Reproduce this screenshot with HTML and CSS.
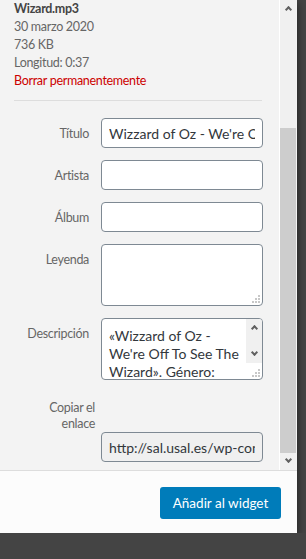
FILE: index.html
```html
<!DOCTYPE html>
<html lang="es">
<head>
  <meta charset="UTF-8" />
  <title>Detalles del adjunto</title>
  <link rel="stylesheet" href="styles.css">
</head>
<body>

<div class="frame">
  <div class="scroller">
    <div class="sidebar">
      <div class="details">
        <div class="filename">Wizard.mp3</div>
        <div>30 marzo 2020</div>
        <div>736 KB</div>
        <div>Longitud: 0:37</div>
        <a class="delete" href="#">Borrar permanentemente</a>
      </div>

      <div class="settings">
        <label class="setting">
          <span class="name">Título</span>
          <input type="text" value="Wizzard of Oz - We're Off To See The Wizard" />
        </label>
        <label class="setting">
          <span class="name">Artista</span>
          <input type="text" value="" />
        </label>
        <label class="setting">
          <span class="name">Álbum</span>
          <input type="text" value="" />
        </label>
        <label class="setting">
          <span class="name">Leyenda</span>
          <span class="box">
            <textarea></textarea>
            <svg class="grip" width="8" height="8" viewBox="0 0 8 8">
              <rect x="6" y="0" width="2" height="2" />
              <rect x="3" y="3" width="2" height="2" />
              <rect x="6" y="3" width="2" height="2" />
              <rect x="0" y="6" width="2" height="2" />
              <rect x="3" y="6" width="2" height="2" />
              <rect x="6" y="6" width="2" height="2" />
            </svg>
          </span>
        </label>
        <label class="setting">
          <span class="name">Descripción</span>
          <span class="box">
            <textarea class="with-scroll">«Wizzard of Oz - We're Off To See The Wizard». Género: Soundtrack.</textarea>
            <span class="mini-scroll">
              <span class="arrow up"></span>
              <span class="arrow down"></span>
            </span>
            <svg class="grip" width="8" height="8" viewBox="0 0 8 8">
              <rect x="6" y="0" width="2" height="2" />
              <rect x="3" y="3" width="2" height="2" />
              <rect x="6" y="3" width="2" height="2" />
              <rect x="0" y="6" width="2" height="2" />
              <rect x="3" y="6" width="2" height="2" />
              <rect x="6" y="6" width="2" height="2" />
            </svg>
          </span>
        </label>
        <label class="setting url">
          <span class="name">Copiar el enlace</span>
          <input type="text" readonly value="http://sal.usal.es/wp-content/uploads/2020/03/Wizard.mp3" />
        </label>
      </div>
    </div>

    <div class="scrollbar">
      <span class="arrow up"></span>
      <span class="thumb"></span>
      <span class="arrow down"></span>
    </div>
  </div>

  <div class="toolbar">
    <button>Añadir al widget</button>
  </div>
</div>

</body>
</html>
```

FILE: styles.css
```css
body {
  margin: 0;
  background: #444;
  font-family: "Lato", "Liberation Sans", sans-serif;
  font-size: 12.5px;
  letter-spacing: -0.3px;
  color: #666;
}

.frame {
  width: 297px;
  height: 533px;
  display: flex;
  flex-direction: column;
  background: #f3f3f3;
  box-shadow: 0 3px 8px rgba(0, 0, 0, 0.6);
}

.scroller {
  height: 470px;
  display: flex;
  border-bottom: 1px solid #ddd;
}

.sidebar {
  width: 280px;
  padding: 0 17px 0 14px;
  box-sizing: border-box;
  border-right: 1px solid #fff;
  overflow: hidden;
}

.details {
  line-height: 18px;
  padding-bottom: 10px;
  border-bottom: 1px solid #ddd;
}

.details .filename {
  font-weight: bold;
  color: #444;
}

.details .delete {
  color: #c00;
  text-decoration: none;
}

.settings {
  padding-top: 17px;
}

.setting {
  display: grid;
  grid-template-columns: 75px 162px;
  column-gap: 12px;
  margin-bottom: 12px;
}

.setting .name {
  text-align: right;
  padding-top: 7px;
  line-height: 18px;
}

.setting.url .name {
  grid-column: 1 / 3;
  width: 81px;
  padding-top: 8px;
  line-height: 16px;
}

.setting.url input {
  grid-column: 2;
  background: #f0f0f0;
}

input,
textarea {
  width: 162px;
  height: 30px;
  box-sizing: border-box;
  margin: 0;
  padding: 0 7px;
  border: 1px solid #7e8993;
  border-radius: 4px;
  background: #fff;
  font-family: inherit;
  font-size: 14px;
  letter-spacing: 0;
  color: #32373c;
}

.box {
  position: relative;
  display: block;
}

textarea {
  display: block;
  height: 62px;
  padding: 8px 7px;
  line-height: 18px;
  resize: none;
  overflow: hidden;
}

textarea.with-scroll {
  padding-right: 18px;
}

.grip {
  position: absolute;
  right: 3px;
  bottom: 3px;
  fill: #c8c8c8;
}

.mini-scroll {
  position: absolute;
  top: 1px;
  right: 1px;
  width: 16px;
  height: 44px;
  background: #f0f0f0;
  display: flex;
  flex-direction: column;
  justify-content: space-between;
  border-top-right-radius: 3px;
}

.arrow {
  display: block;
  height: 17px;
}

.arrow::before {
  content: "";
  display: block;
  width: 5px;
  height: 5px;
  margin: 0 auto;
  border-left: 2px solid #606060;
  border-top: 2px solid #606060;
  box-sizing: border-box;
  transform: rotate(45deg);
}

.arrow.up::before {
  margin-top: 7px;
}

.arrow.down::before {
  margin-top: 4px;
  transform: rotate(225deg);
}

.scrollbar {
  width: 16px;
  background: #f0f0f0;
  display: flex;
  flex-direction: column;
}

.scrollbar .thumb {
  display: block;
  margin-top: 111px;
  height: 326px;
  background: #cdcdcd;
}

.scrollbar .arrow.down {
  margin-top: auto;
}

.toolbar {
  flex: 1;
  background: #fcfcfc;
  display: flex;
  justify-content: flex-end;
  align-items: flex-start;
  padding: 16px 16px 0 0;
}

button {
  height: 32px;
  width: 121px;
  padding: 0;
  background: #007cba;
  color: #fff;
  border: none;
  border-radius: 3px;
  font-family: inherit;
  font-size: 13.5px;
  letter-spacing: 0;
  cursor: pointer;
}
```
